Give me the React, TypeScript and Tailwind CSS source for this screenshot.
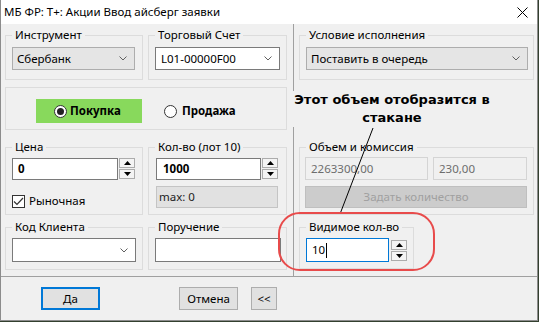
import type { ReactNode } from "react";

function GroupBox({
  label,
  className,
  children,
}: {
  label?: string;
  className: string;
  children?: ReactNode;
}) {
  return (
    <div className={`relative shrink-0 border border-[#dcdcdc] ${className}`}>
      {label && (
        <span className="absolute -top-[9px] left-[6px] bg-[#f0f0f0] px-[3px] leading-[16px]">
          {label}
        </span>
      )}
      {children}
    </div>
  );
}

function Chevron() {
  return (
    <svg width="8" height="5" viewBox="0 0 8 5" className="shrink-0">
      <path d="M0.5 0.5 L4 4 L7.5 0.5" fill="none" stroke="#606060" strokeWidth="1" />
    </svg>
  );
}

function Spinner({ className = "" }: { className?: string }) {
  return (
    <div className={`flex w-[16px] shrink-0 flex-col gap-[1px] ${className}`}>
      <div className="flex h-[10px] items-center justify-center border border-[#acacac] bg-[#f4f4f4]">
        <svg width="7" height="4" viewBox="0 0 7 4">
          <path d="M0 4 L3.5 0 L7 4 Z" fill="#000" />
        </svg>
      </div>
      <div className="flex h-[10px] items-center justify-center border border-[#acacac] bg-[#f4f4f4]">
        <svg width="7" height="4" viewBox="0 0 7 4">
          <path d="M0 0 L3.5 4 L7 0 Z" fill="#000" />
        </svg>
      </div>
    </div>
  );
}

function Radio({ checked }: { checked?: boolean }) {
  return (
    <span className="flex h-[13px] w-[13px] shrink-0 items-center justify-center rounded-full border border-[#333] bg-white">
      {checked && <span className="h-[7px] w-[7px] rounded-full bg-[#222]" />}
    </span>
  );
}

export default function App() {
  return (
    <div className="h-[322px] w-[539px] overflow-hidden bg-[#33402f]">
      <div className="relative h-[321px] w-[538px] border-x border-b border-[#8c8c8c] bg-[#f0f0f0] font-['Segoe_UI','Noto_Sans',sans-serif] text-[11.5px] leading-[16px] text-black">
        {/* title bar */}
        <div className="flex h-[24px] items-center justify-between bg-white pl-[3px] pr-[9px]">
          <span>МБ ФР: Т+: Акции Ввод айсберг заявки</span>
          <svg width="11" height="11" viewBox="0 0 11 11">
            <path d="M0.5 0.5 L10.5 10.5 M10.5 0.5 L0.5 10.5" stroke="#000" strokeWidth="1" />
          </svg>
        </div>

        {/* body */}
        <div className="flex h-[253px] border-b border-[#a0a0a0]">
          {/* left column */}
          <div className="flex w-[293px] shrink-0 flex-col border-r border-[#a0a0a0] pl-[4px] pt-[11px]">
            <div className="flex gap-[5px]">
              <GroupBox label="Инструмент" className="h-[45px] w-[138px] pl-[6px] pt-[11px]">
                <div className="flex h-[23px] w-[123px] items-center justify-between border border-[#adadad] bg-[#e5e5e5] pl-[4px] pr-[7px]">
                  <span>Сбербанк</span>
                  <Chevron />
                </div>
              </GroupBox>
              <GroupBox label="Торговый Счет" className="h-[45px] w-[139px] pl-[6px] pt-[11px]">
                <div className="flex h-[23px] w-[125px] items-center justify-between border border-[#7a7a7a] bg-white pl-[5px] pr-[7px]">
                  <span>L01-00000F00</span>
                  <Chevron />
                </div>
              </GroupBox>
            </div>

            <GroupBox className="mt-[7px] flex h-[43px] w-[282px] pl-[30px] pt-[11px]">
              <div className="flex h-[24px] w-[106px] items-center bg-[#88d95c] pl-[18px]">
                <Radio checked />
                <span className="ml-[3px] font-bold">Покупка</span>
              </div>
              <div className="ml-[22px] flex h-[24px] items-center">
                <Radio />
                <span className="ml-[5px] font-bold">Продажа</span>
              </div>
            </GroupBox>

            <div className="mt-[17px] flex gap-[5px]">
              <GroupBox label="Цена" className="h-[68px] w-[138px] pl-[6px] pt-[10px]">
                <div className="flex">
                  <div className="flex h-[22px] w-[106px] items-center border border-[#7a7a7a] bg-white pl-[5px] font-bold">
                    0
                  </div>
                  <Spinner className="ml-[1px]" />
                </div>
                <div className="mt-[13px] flex items-center">
                  <span className="flex h-[13px] w-[13px] items-center justify-center border border-[#333] bg-white">
                    <svg width="11" height="9" viewBox="0 0 11 9">
                      <path d="M1 4.5 L4 7.5 L10 1" fill="none" stroke="#333" strokeWidth="1.2" />
                    </svg>
                  </span>
                  <span className="ml-[4px]">Рыночная</span>
                </div>
              </GroupBox>
              <GroupBox label="Кол-во (лот 10)" className="h-[68px] w-[139px] pl-[7px] pt-[10px]">
                <div className="flex">
                  <div className="flex h-[22px] w-[105px] items-center border border-[#7a7a7a] bg-white pl-[6px] font-bold">
                    1000
                  </div>
                  <Spinner className="ml-[1px]" />
                </div>
                <div className="mt-[6px] flex h-[22px] w-[122px] items-center border border-[#c4c4c4] bg-[#e1e1e1] pl-[2px] text-[#222]">
                  max: 0
                </div>
              </GroupBox>
            </div>

            <div className="mt-[12px] flex gap-[5px]">
              <GroupBox label="Код Клиента" className="h-[43px] w-[138px] pl-[6px] pt-[10px]">
                <div className="flex h-[24px] w-[124px] items-center justify-end border border-[#7a7a7a] bg-white pr-[7px]">
                  <Chevron />
                </div>
              </GroupBox>
              <GroupBox label="Поручение" className="h-[43px] w-[139px] pl-[6px] pt-[10px]">
                <div className="h-[24px] w-[126px] border border-[#7a7a7a] bg-white" />
              </GroupBox>
            </div>
          </div>

          {/* right column */}
          <div className="flex flex-1 flex-col pl-[5px] pt-[11px]">
            <GroupBox label="Условие исполнения" className="h-[45px] w-[235px] pl-[6px] pt-[11px]">
              <div className="flex h-[23px] w-[222px] items-center justify-between border border-[#adadad] bg-[#e5e5e5] pl-[4px] pr-[7px]">
                <span>Поставить в очередь</span>
                <Chevron />
              </div>
            </GroupBox>

            <GroupBox label="Объем и комиссия" className="mt-[67px] h-[68px] w-[235px] pl-[5px] pt-[9px]">
              <div className="flex gap-[5px]">
                <div className="flex h-[23px] w-[123px] items-center border border-[#d4d4d4] bg-[#f0f0f0] pl-[5px] text-[#6d6d6d]">
                  2263300,00
                </div>
                <div className="flex h-[23px] w-[94px] items-center border border-[#d4d4d4] bg-[#f0f0f0] pl-[5px] text-[#6d6d6d]">
                  230,00
                </div>
              </div>
              <div className="mt-[6px] flex h-[22px] w-[222px] items-center justify-center border border-[#bfbfbf] bg-[#cccccc] text-[#a0a0a0]">
                Задать количество
              </div>
            </GroupBox>

            <GroupBox label="Видимое кол-во" className="mt-[12px] h-[42px] w-[115px] pl-[6px] pt-[10px]">
              <div className="flex">
                <div className="flex h-[24px] w-[83px] items-center border border-[#0078d7] bg-white pl-[5px]">
                  10
                  <span className="ml-[1px] h-[15px] w-[1px] bg-black" />
                </div>
                <Spinner className="ml-[2px] mt-[2px]" />
              </div>
            </GroupBox>
          </div>
        </div>

        {/* buttons */}
        <div className="flex pl-[40px] pt-[10px]">
          <button className="h-[23px] w-[59px] border-2 border-[#0078d7] bg-[#e1e1e1]">Да</button>
          <button className="ml-[79px] h-[23px] w-[59px] border border-[#adadad] bg-[#e1e1e1]">Отмена</button>
          <button className="ml-[13px] h-[23px] w-[26px] border border-[#adadad] bg-[#e1e1e1]">&lt;&lt;</button>
        </div>

        {/* annotation */}
        <div className="absolute left-[292px] top-[91px] w-[198px] bg-[#f0f0f0] text-center font-['DejaVu_Sans',sans-serif] text-[13px] font-bold leading-[18px]">
          Этот объем отобразится в<br />стакане
        </div>
        <svg className="pointer-events-none absolute left-0 top-0" width="538" height="321">
          <line x1="372" y1="128" x2="339" y2="214" stroke="#000" strokeWidth="1" />
        </svg>
        <div className="pointer-events-none absolute left-[277px] top-[212px] h-[59px] w-[157px] rounded-[22px] border-2 border-[#e84b4b]" />
      </div>
    </div>
  );
}
